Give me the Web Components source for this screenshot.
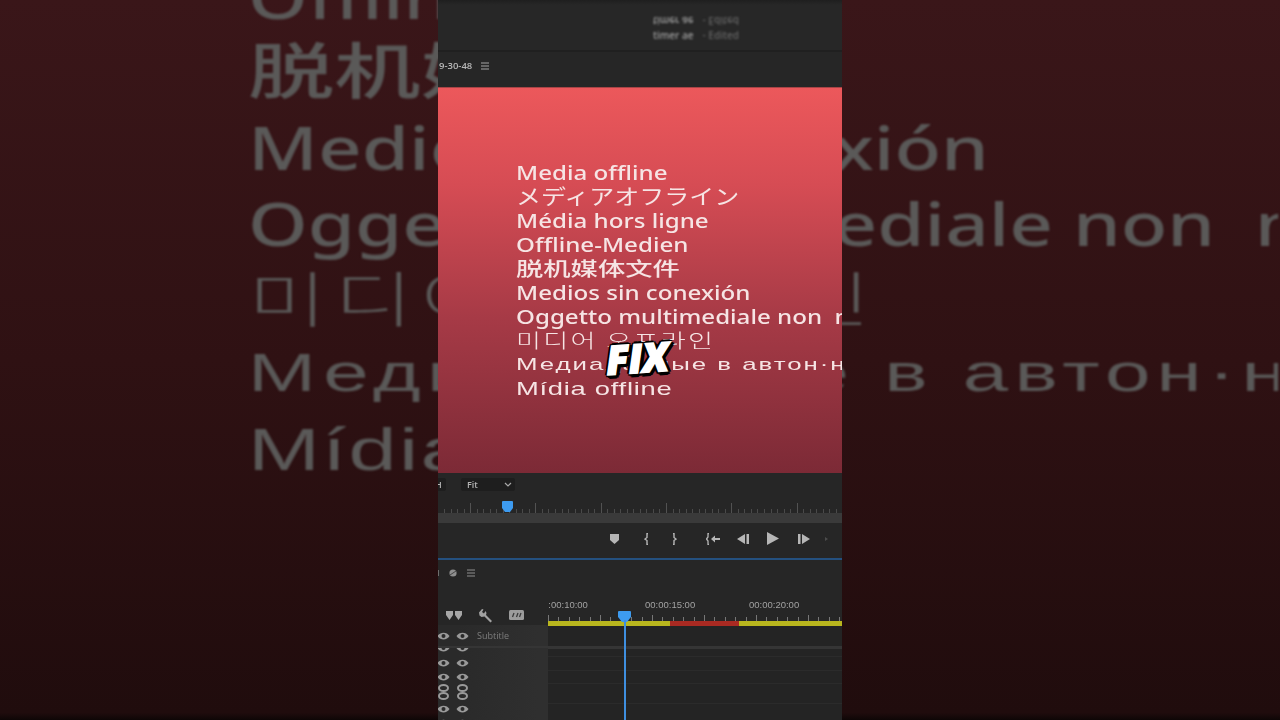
<!DOCTYPE html>
<html lang="en">
<head>
<meta charset="utf-8">
<title>Media offline</title>
<style>
    html, body { margin: 0; height: 100%; background: #220c0e; }
    body { overflow: hidden; font-family: "Noto Sans", "Noto Sans CJK SC", sans-serif; }
</style>
</head>
<body>
<video-frame>
    <offline-list slot="backdrop"></offline-list>
    <program-header></program-header>
    <sequence-tab></sequence-tab>
    <media-slate>
        <offline-list></offline-list>
        <fix-caption slot="overlay">FIX</fix-caption>
    </media-slate>
    <scrub-strip></scrub-strip>
    <sequence-timeline></sequence-timeline>
</video-frame>
<script>
class ShadowBase extends HTMLElement {
    constructor(){
        super();
        this.attachShadow({ mode: 'open' });
        this.shadowRoot.innerHTML = `<style>${this._getCSS()}</style>${this._getHTML()}`;
    }
    _getCSS(){ return ''; }
    _getHTML(){ return '<slot></slot>'; }
}

class VideoFrame extends ShadowBase {
    _getCSS(){
        return `
            :host {
                display: block;
                position: relative;
                width: 1280px;
                height: 720px;
                overflow: hidden;
                background: linear-gradient(#3a1619, #2f1113 50%, #200c0d 99%, #0e0606);
            }
            #backdrop {
                position: absolute;
                left: 248px;
                top: -269px;
                width: 326px;
                height: 240px;
                overflow: hidden;
                color: #5a5958;
                transform: scale(3.16);
                transform-origin: 0 0;
                filter: blur(.3px);
            }
            #column {
                position: relative;
                width: 404px;
                height: 720px;
                margin: 0 auto;
                display: flex;
                flex-direction: column;
                background: #262626;
                overflow: hidden;
            }
        `;
    }
    _getHTML(){
        return `
            <div id="backdrop"><slot name="backdrop"></slot></div>
            <div id="column"><slot></slot></div>
        `;
    }
}

class OfflineList extends ShadowBase {
    _getCSS(){
        return `
            :host {
                display: grid;
                grid-auto-rows: 24px;
                align-items: center;
                width: 400px;
                white-space: pre;
                font: 500 19px/24px "Noto Sans", "Noto Sans CJK SC", sans-serif;
            }
            div { width: max-content; transform-origin: 0 50%; transform: translateY(var(--dy, 0)) scaleX(var(--sx, 1.27)); }
            .jp { font: 400 21px/24px "Noto Sans CJK JP", sans-serif; --sx: 1.19; --dy: -2px; }
            .zh { font: 500 19.5px/24px "Noto Sans CJK SC", sans-serif; --sx: 1.4; --dy: -1px; }
            .ko { font: 300 19px/24px "Noto Sans CJK KR", sans-serif; --sx: 1.43; --dy: -1px; letter-spacing: 1.6px; }
            .ru { font: 400 17px/24px "Liberation Sans", sans-serif; --sx: 1.52; letter-spacing: 1.3px; }
            .pt { font: 400 19px/24px "Liberation Sans", sans-serif; --sx: 1.44; letter-spacing: .5px; }
        `;
    }
    _getHTML(){
        return `
            <div>Media offline</div>
            <div class="jp">メディアオフライン</div>
            <div>Média hors ligne</div>
            <div>Offline-Medien</div>
            <div class="zh">脱机媒体文件</div>
            <div>Medios sin conexión</div>
            <div>Oggetto multimediale non  multimediale</div>
            <div class="ko">미디어 오프라인</div>
            <div class="ru">Медиаданные в автон·н</div>
            <div class="pt">Mídia offline</div>
        `;
    }
}

class ProgramHeader extends ShadowBase {
    _getCSS(){
        return `
            :host {
                display: flex;
                flex-direction: column;
                align-items: flex-start;
                gap: 2px;
                height: 52px;
                flex: none;
                box-sizing: border-box;
                padding: 15px 0 0 215px;
                background: linear-gradient(#1f1f1f, #272727 5px);
                border-bottom: 2px solid #202020;
                font: 600 10px/12px "Open Sans", sans-serif;
                color: #9c9c9c;
            }
            .line { display: flex; gap: 9px; filter: blur(.8px); }
            .flip { transform: scaleY(-1); }
            .dim { color: #636363; }
        `;
    }
    _getHTML(){
        return `
            <div class="line flip"><span>timer ae</span><span class="dim">- Edited</span></div>
            <div class="line"><span>timer ae</span><span class="dim">- Edited</span></div>
        `;
    }
}

class SequenceTab extends ShadowBase {
    _getCSS(){
        return `
            :host {
                display: flex;
                align-items: center;
                gap: 9px;
                height: 35px;
                flex: none;
                box-sizing: border-box;
                padding: 0 0 8px 1px;
                font: 600 9.500px/12px "Open Sans", sans-serif;
                color: #b8b8b8;
            }
            span { filter: blur(.7px); }
            svg { display: block; filter: blur(.4px); }
        `;
    }
    _getHTML(){
        return `
            <span>9-30-48</span>
            <svg width="8" height="8" viewBox="0 0 8 8"><path d="M0 1h8M0 4h8M0 7h8" stroke="#a4a4a4" stroke-width="1.2"/></svg>
        `;
    }
}

class MediaSlate extends ShadowBase {
    _getCSS(){
        return `
            :host {
                display: block;
                position: relative;
                height: 386px;
                flex: none;
                box-sizing: border-box;
                padding: 73px 0 0 78px;
                overflow: hidden;
                color: #f6e4e4;
                background: linear-gradient(#ec585b, #d64c54 25%, #a63a46 60%, #7c2a36);
                border-top: 1px solid #a84446;
            }
            #text { filter: blur(.4px); }
        `;
    }
    _getHTML(){
        return `<div id="text"><slot></slot></div><slot name="overlay"></slot>`;
    }
}

class FixCaption extends ShadowBase {
    _getCSS(){
        return `
            :host {
                position: absolute;
                left: 168px;
                top: 247px;
                transform: rotate(-4deg);
                font: italic 800 40px/46px "Open Sans", sans-serif;
                letter-spacing: -.5px;
                color: #fff;
                -webkit-text-stroke: 1.500px #fff;
                text-shadow:
                    3px 0 #000, -3px 0 #000, 0 3px #000, 0 -3px #000,
                    2px 2px #000, -2px 2px #000, 2px -2px #000, -2px -2px #000,
                    3px 3px #000, 4px 1px #000, 1px 4px #000;
            }
        `;
    }
}

class ScrubStrip extends ShadowBase {
    _getCSS(){
        return `
            :host {
                display: flex;
                flex-direction: column;
                height: 85px;
                flex: none;
                background: #262626;
                border-bottom: 2px solid #24507f;
                box-sizing: content-box;
            }
            #fit-row { display: flex; gap: 15px; align-items: center; height: 22px; }
            .select {
                display: flex;
                align-items: center;
                justify-content: space-between;
                box-sizing: border-box;
                height: 13px;
                background: #1e1e1e;
                border-radius: 2px;
                font: 600 9px/13px "Open Sans", sans-serif;
                color: #b4b4b4;
                filter: blur(.4px);
            }
            #zoom { width: 14px; margin-left: -6px; padding-left: 3px; }
            #fit { width: 54px; padding: 0 3px 0 6px; }
            #ruler {
                position: relative;
                height: 18px;
                box-sizing: border-box;
                background:
                    repeating-linear-gradient(90deg, #525252 0 1px, transparent 1px 65.300px) 32px 100% / 100% 10px no-repeat,
                    repeating-linear-gradient(90deg, #4a4a4a 0 1px, transparent 1px 6.530px) 6px 100% / 100% 4px no-repeat;
                filter: blur(.3px);
            }
            #thumb { position: absolute; left: 64px; top: 6px; }
            #band { height: 10px; background: #3a3a3a; }
            #transport { flex: 1; display: flex; align-items: center; padding: 0 0 4px 172px; }
            #transport svg { display: block; filter: blur(.4px); }
        `;
    }
    _getHTML(){
        const c = '#b6b6b6';
        return `
            <div id="fit-row">
                <div class="select" id="zoom">H</div>
                <div class="select" id="fit">Fit
                    <svg width="8" height="5" viewBox="0 0 8 5"><path d="M1 1l3 3 3-3" fill="none" stroke="#a8a8a8" stroke-width="1.2"/></svg>
                </div>
            </div>
            <div id="ruler">
                <svg id="thumb" width="11" height="11" viewBox="0 0 11 11"><path d="M1 0h9a1 1 0 0 1 1 1v6l-3 4H3L0 7V1a1 1 0 0 1 1-1z" fill="#3d9bf0"/></svg>
            </div>
            <div id="band"></div>
            <div id="transport">
                <svg width="9" height="10" viewBox="0 0 9 10" style="margin-right:25px"><path d="M0 0h9v6L4.500 10 0 6z" fill="${c}"/></svg>
                <svg width="5" height="12" viewBox="0 0 5 12" style="margin-right:23px"><path d="M4 .5H3V4.500L1 6l2 1.500v4h1" fill="none" stroke="${c}" stroke-width="1.400"/></svg>
                <svg width="5" height="12" viewBox="0 0 5 12" style="margin-right:29px"><path d="M1 .5h1V4.500L4 6 2 7.500v4H1" fill="none" stroke="${c}" stroke-width="1.400"/></svg>
                <svg width="14" height="12" viewBox="0 0 14 12" style="margin-right:17px"><path d="M3 .5H2V4L.5 6 2 8v3.500h1" fill="none" stroke="${c}" stroke-width="1.300"/><path d="M5 6l4-3.500V5h5v2H9v2.500z" fill="${c}"/></svg>
                <svg width="12" height="10" viewBox="0 0 12 10" style="margin-right:18px"><path d="M8 0v10L0 5zM9.500 0H12v10H9.500z" fill="${c}"/></svg>
                <svg width="12" height="13" viewBox="0 0 12 13" style="margin-right:19px"><path d="M0 0l12 6.500L0 13z" fill="${c}"/></svg>
                <svg width="12" height="10" viewBox="0 0 12 10" style="margin-right:15px"><path d="M4 0v10l8-5zM0 0h2.500v10H0z" fill="${c}"/></svg>
                <svg width="3" height="4" viewBox="0 0 3 4"><path d="M0 0l3 2-3 2z" fill="#4c4c4c"/></svg>
            </div>
        `;
    }
}

class SequenceTimeline extends ShadowBase {
    _getCSS(){
        return `
            :host {
                display: flex;
                flex-direction: column;
                flex: 1;
                position: relative;
                min-height: 0;
                background: #262626;
            }
            svg { display: block; }
            #tabs { display: flex; align-items: center; gap: 10px; height: 25px; margin-left: -7px; flex: none; filter: blur(.5px); }
            #main { flex: 1; display: grid; grid-template-columns: 110px 1fr; min-height: 0; }
            #tools { display: flex; align-items: center; gap: 16px; height: 40px; box-sizing: border-box; padding: 20px 0 0 8px; filter: blur(.4px); }
            .row { display: flex; align-items: center; gap: 6px; box-sizing: border-box; height: 14px; overflow: hidden; background: linear-gradient(90deg, #2a2a2a 20px, #2f2f2f 100px); filter: blur(.4px); }
            .row svg:first-child { margin-left: -1px; }
            .row.first { height: 21px; }
            .row.gap { height: 2px; background: #353535; }
            .row.part { height: 8px; align-items: flex-start; }
            .row.part svg { margin-top: -5px; }
            .label { margin-left: 2px; font: 400 9px/12px "Open Sans", sans-serif; color: #7d7d7d; filter: blur(.3px); }
            #times { position: relative; height: 36px; overflow: hidden; font: 400 9.500px/12px "Liberation Sans", sans-serif; color: #a2a2a2; }
            #times span { position: absolute; top: 14px; filter: blur(.4px); }
            #times i { position: absolute; bottom: 0; width: 1px; height: 4px; background: #777; }
            #bar {
                height: 5px;
                position: relative;
                background: linear-gradient(90deg, #b9b61e 0 122px, #a92a22 122px 191px, #b9b61e 191px);
            }
            #tracks {
                height: 99px;
                background:
                    linear-gradient(#353535, #353535) 0 20px / 100% 3px no-repeat,
                    linear-gradient(#2b2b2b, #2b2b2b) 0 30px / 100% 1px no-repeat,
                    linear-gradient(#2b2b2b, #2b2b2b) 0 44px / 100% 1px no-repeat,
                    linear-gradient(#2b2b2b, #2b2b2b) 0 57px / 100% 1px no-repeat,
                    linear-gradient(#2b2b2b, #2b2b2b) 0 77px / 100% 1px no-repeat,
                    #242424;
            }
            #head { position: absolute; left: 180px; top: 51px; }
            #line { position: absolute; left: 186px; top: 60px; bottom: 0; width: 2px; background: #3f8fdf; }
        `;
    }
    _getHTML(){
        const eye = '<svg width="13" height="10" viewBox="0 0 13 10"><path d="M.5 5C3 .5 10 .5 12.500 5 10 9.500 3 9.500 .5 5z" fill="#9a9a9a"/><circle cx="6.500" cy="5" r="2" fill="#2a2a2a"/></svg>';
        const eyes = `${eye}${eye}`;
        const chain = '<svg width="13" height="16" viewBox="0 0 13 16"><ellipse cx="6.500" cy="4" rx="4.500" ry="3" fill="none" stroke="#9a9a9a" stroke-width="2"/><ellipse cx="6.500" cy="12" rx="4.500" ry="3" fill="none" stroke="#9a9a9a" stroke-width="2"/></svg>';
        let ticks = '';
        for(let i = 0; i < 29; i++){
            ticks += `<i style="left:${(i * 10.4).toFixed(1)}px;${i % 5 === 0 ? 'height:6px' : ''}"></i>`;
        }
        return `
            <div id="tabs">
                <svg width="8" height="8" viewBox="0 0 8 8"><rect x="4" y="1" width="4" height="6" fill="#6e6e6e"/></svg>
                <svg width="8" height="8" viewBox="0 0 8 8"><circle cx="4" cy="4" r="3.600" fill="#8e8e8e"/><path d="M1 6l6-4" stroke="#444"/></svg>
                <svg width="8" height="8" viewBox="0 0 8 8"><path d="M0 1h8M0 4h8M0 7h8" stroke="#8e8e8e" stroke-width="1.200"/></svg>
            </div>
            <div id="main">
                <div id="left">
                    <div id="tools">
                        <svg width="16" height="9" viewBox="0 0 16 9"><path d="M0 0h7v4L3.500 9 0 4zM9 0h7v4l-3.500 5L9 4z" fill="#a6a6a6"/></svg>
                        <svg width="15" height="15" viewBox="0 0 15 15"><path d="M1 4.500L4 1l1.500 .5L4 4l2 1.500L7.500 3l1 2-.5 2 6 6-1.500 1.500-6-6-3 .5-2-1.500z" fill="#a2a2a2"/></svg>
                        <svg width="15" height="10" viewBox="0 0 15 10"><rect width="15" height="10" rx="1.500" fill="#9c9c9c"/><path d="M5 3L3.500 7M9 3L7.500 7M12 3l-1.500 4" stroke="#3a3a3a" stroke-width="1.300"/></svg>
                    </div>
                    <div class="row first">${eyes}<span class="label">Subtitle</span></div>
                    <div class="row gap"></div>
                    <div class="row part">${eyes}</div>
                    <div class="row">${eyes}</div>
                    <div class="row" style="height:13px">${eyes}</div>
                    <div class="row" style="height:18px">${chain.repeat(2)}</div>
                    <div class="row" style="height:15px">${eyes}</div>
                    <div class="row">${eyes}</div>
                </div>
                <div id="right">
                    <div id="times">
                        <span style="left:-5px">0:00:10:00</span>
                        <span style="left:97px">00:00:15:00</span>
                        <span style="left:201px">00:00:20:00</span>
                        ${ticks}
                    </div>
                    <div id="bar"></div>
                    <div id="tracks"></div>
                </div>
            </div>
            <svg id="head" width="13" height="11" viewBox="0 0 13 11"><path d="M1 0h11a1 1 0 0 1 1 1v5l-4 5H4L0 6V1a1 1 0 0 1 1-1z" fill="#3d9bf0"/></svg>
            <div id="line"></div>
        `;
    }
}

window.customElements.define('video-frame', VideoFrame);
window.customElements.define('offline-list', OfflineList);
window.customElements.define('program-header', ProgramHeader);
window.customElements.define('sequence-tab', SequenceTab);
window.customElements.define('media-slate', MediaSlate);
window.customElements.define('fix-caption', FixCaption);
window.customElements.define('scrub-strip', ScrubStrip);
window.customElements.define('sequence-timeline', SequenceTimeline);
</script>
</body>
</html>
